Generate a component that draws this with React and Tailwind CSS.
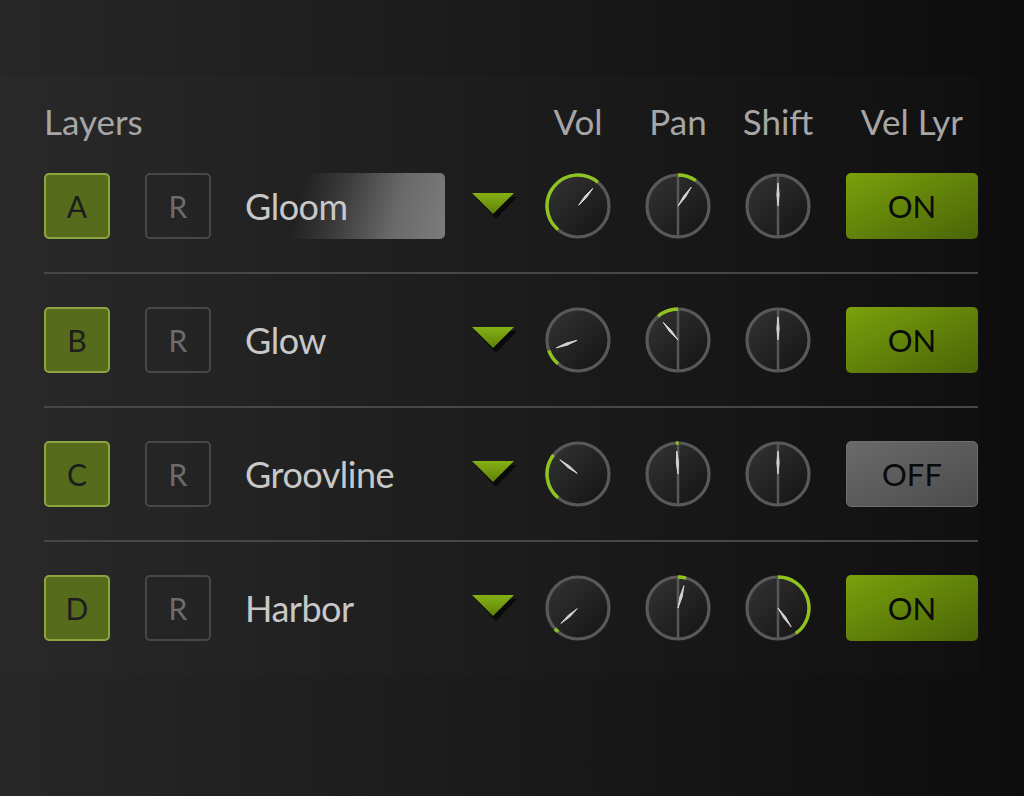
const GREEN = '#8fc31f';

const layers = [
  { id: 'A', name: 'Gloom', vol: 40, pan: 35, shift: 0, on: true, active: true },
  { id: 'B', name: 'Glow', vol: -110, pan: -40, shift: 0, on: true },
  { id: 'C', name: 'Groovline', vol: -52, pan: -3, shift: 0, on: false },
  { id: 'D', name: 'Harbor', vol: -132, pan: 15, shift: 145, on: true },
];

const pt = (a, r) => {
  const rad = (a * Math.PI) / 180;
  return [33 + r * Math.sin(rad), 33 - r * Math.cos(rad)];
};

function arc(a1, a2, r) {
  if (a1 > a2) [a1, a2] = [a2, a1];
  if (a2 - a1 < 4) {
    const m = (a1 + a2) / 2;
    a1 = m - 2.5;
    a2 = m + 2.5;
  }
  const [x1, y1] = pt(a1, r);
  const [x2, y2] = pt(a2, r);
  const large = a2 - a1 > 180 ? 1 : 0;
  return `M ${x1} ${y1} A ${r} ${r} 0 ${large} 1 ${x2} ${y2}`;
}

// tapered needle, widest in the middle
function needle(a, r0, r1) {
  const [x0, y0] = pt(a, r0);
  const [x1, y1] = pt(a, r1);
  const [mx, my] = pt(a, (r0 + r1) / 2);
  const rad = (a * Math.PI) / 180;
  const nx = Math.cos(rad) * 1.1;
  const ny = Math.sin(rad) * 1.1;
  return `M ${x0} ${y0} L ${mx + nx} ${my + ny} L ${x1} ${y1} L ${mx - nx} ${my - ny} Z`;
}

function Knob({ value, bipolar, uid }) {
  const from = bipolar ? 0 : -140;
  const showArc = bipolar ? value !== 0 : true;
  return (
    <svg width="66" height="66" viewBox="0 0 66 66" className="shrink-0">
      <defs>
        <linearGradient id={`kf-${uid}`} x1="0" y1="0" x2="1" y2="1">
          <stop offset="0" stopColor="#343434" />
          <stop offset="1" stopColor="#131313" />
        </linearGradient>
      </defs>
      <circle cx="33" cy="33" r="31" fill={`url(#kf-${uid})`} stroke="#595959" strokeWidth="3.2" />
      {bipolar && <line x1="33" y1="2" x2="33" y2="64" stroke="#585858" strokeWidth="2.5" />}
      {showArc && (
        <path d={arc(from, value, 31)} fill="none" stroke={GREEN} strokeWidth="3.4" />
      )}
      <path d={needle(value, bipolar ? 0 : 1, 23)} fill="#d4d4d4" stroke="#d4d4d4" strokeWidth="1" strokeLinejoin="round" />
    </svg>
  );
}

function Row({ layer, last }) {
  return (
    <div className={`flex items-center py-[33px] ${last ? '' : 'border-b-2 border-[#474747]'}`}>
      <div className="flex h-[66px] w-[66px] shrink-0 items-center justify-center rounded-[5px] border-2 border-[#8ea53f] bg-[#566b1c] text-[30px] text-[#1d1d1d]">
        {layer.id}
      </div>
      <div className="ml-[35px] flex h-[66px] w-[66px] shrink-0 items-center justify-center rounded-[5px] border-2 border-[#484848] text-[30px] text-[#6c6c6c]">
        R
      </div>
      <div
        className={`ml-[34px] flex h-[66px] w-[200px] shrink-0 items-center rounded-r-[5px] text-[36px] tracking-[-0.5px] text-[#c8c8c8] ${
          layer.active ? 'bg-[linear-gradient(105deg,transparent_28%,#3c3c3c_48%,#6a6a6a_75%,#7c7c7c_100%)]' : ''
        }`}
      >
        {layer.name}
      </div>
      <svg width="46" height="26" viewBox="0 0 46 26" className="ml-[27px] shrink-0">
        <defs>
          <linearGradient id={`tri-${layer.id}`} x1="0" y1="0" x2="0" y2="1">
            <stop offset="0" stopColor="#86b114" />
            <stop offset="1" stopColor="#5d800a" />
          </linearGradient>
        </defs>
        <polygon points="3,4 45,4 24,26" fill="#070707" opacity="0.85" />
        <polygon points="0,0 42,0 21,21" fill={`url(#tri-${layer.id})`} />
      </svg>
      <div className="ml-[27px] flex items-center gap-[34px]">
        <Knob value={layer.vol} uid={`v${layer.id}`} />
        <Knob value={layer.pan} bipolar uid={`p${layer.id}`} />
        <Knob value={layer.shift} bipolar uid={`s${layer.id}`} />
      </div>
      <div
        className={`ml-[35px] flex h-[66px] w-[132px] shrink-0 items-center justify-center rounded-[5px] text-[31px] text-[#0a0a0a] ${
          layer.on
            ? 'bg-gradient-to-br from-[#7aa10c] to-[#4a6507]'
            : 'border border-[#6e6e6e] bg-gradient-to-br from-[#6a6a6a] to-[#4c4c4c]'
        }`}
      >
        {layer.on ? 'ON' : 'OFF'}
      </div>
    </div>
  );
}

export default function App() {
  return (
    <div
      className="h-[796px] w-full overflow-hidden bg-gradient-to-r from-[#272727] via-[#1a1a1a] to-[#0d0d0d] pt-[76px]"
      style={{ fontFamily: 'Lato, "Noto Sans", sans-serif' }}
    >
      <div className="mr-[44px] bg-white/[0.012] pl-[44px] pr-[2px]">
        <div className="flex h-[64px] items-end pb-[1px] text-[35px] leading-none text-[#a6a6a6]">
          <div className="w-[484px]">Layers</div>
          <div className="flex">
            <div className="w-[100px] text-center">Vol</div>
            <div className="w-[100px] text-center">Pan</div>
            <div className="w-[100px] text-center">Shift</div>
          </div>
          <div className="ml-[18px] w-[132px] text-center">Vel Lyr</div>
        </div>
        {layers.map((l, i) => (
          <Row key={l.id} layer={l} last={i === layers.length - 1} />
        ))}
      </div>
    </div>
  );
}
